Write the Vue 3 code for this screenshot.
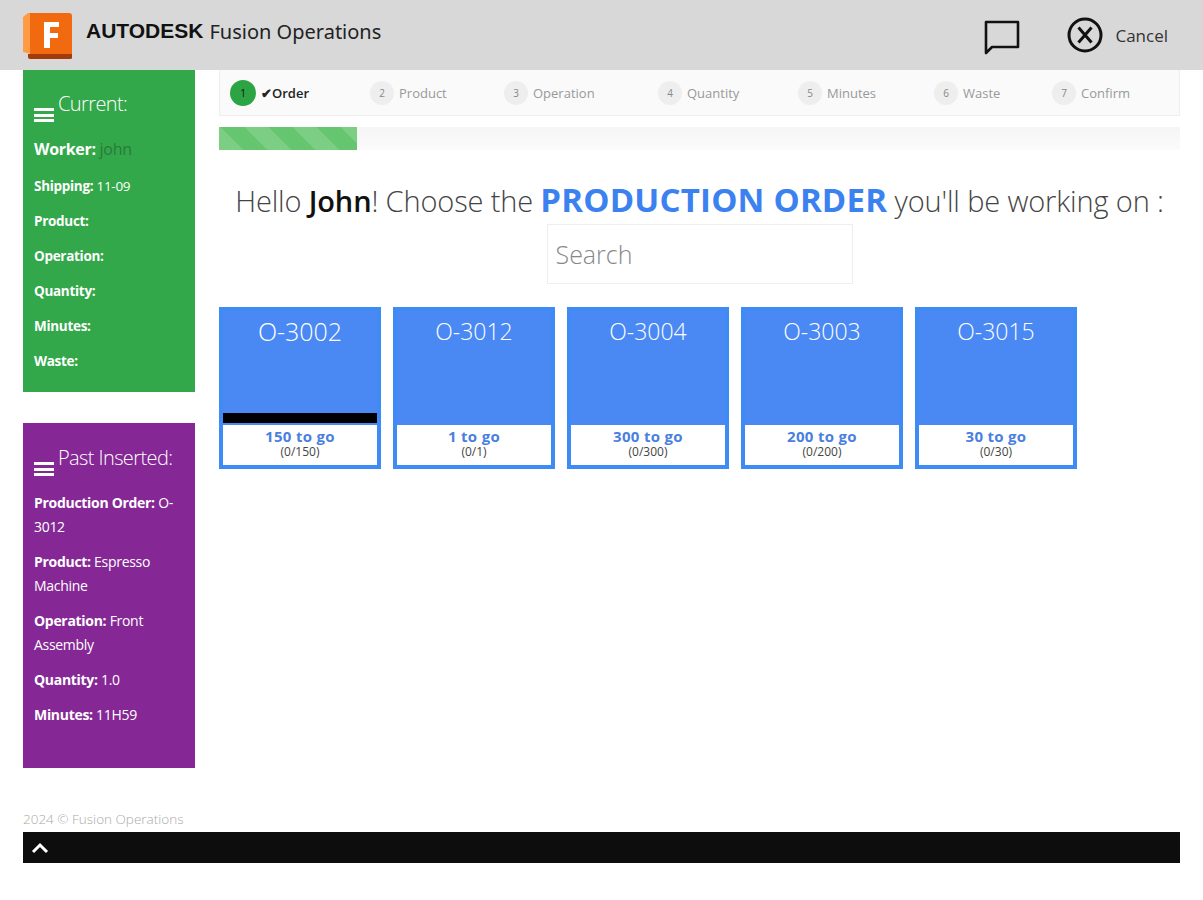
<script setup>
const steps = [
  { n: 1, label: 'Order', width: 140, active: true },
  { n: 2, label: 'Product', width: 134 },
  { n: 3, label: 'Operation', width: 154 },
  { n: 4, label: 'Quantity', width: 140 },
  { n: 5, label: 'Minutes', width: 136 },
  { n: 6, label: 'Waste', width: 118 },
  { n: 7, label: 'Confirm', width: 100 },
]

const orders = [
  { code: 'O-3002', left: 150, total: 150, started: true },
  { code: 'O-3012', left: 1, total: 1 },
  { code: 'O-3004', left: 300, total: 300 },
  { code: 'O-3003', left: 200, total: 200 },
  { code: 'O-3015', left: 30, total: 30 },
]

const current = [
  { key: 'Shipping', value: '11-09' },
  { key: 'Product' },
  { key: 'Operation' },
  { key: 'Quantity' },
  { key: 'Minutes' },
  { key: 'Waste' },
]

const past = [
  { key: 'Production Order', value: 'O-3012' },
  { key: 'Product', value: 'Espresso Machine' },
  { key: 'Operation', value: 'Front Assembly' },
  { key: 'Quantity', value: '1.0' },
  { key: 'Minutes', value: '11H59' },
]
</script>

<template>
  <div class="page">
    <header class="topbar">
      <div class="brand">
        <svg class="logo" width="50" height="47" viewBox="0 0 50 47">
          <path d="M0 5 L5 1 H45 V10 H8 V42 L0 40 Z" fill="#ff9a45" />
          <path d="M5 42 H49 V46 Q49 47 47 47 H7 Q5 47 5 45 Z" fill="#a23a0c" />
          <path d="M7 1 H46 Q49 1 49 4 V42 H7 Z" fill="#f26a0f" />
          <path d="M21 10 H36 V15 H27 V21 H35 V26 H27 V36 H21 Z" fill="#fff" />
        </svg>
        <span class="brand-name">AUTODESK</span>
        <span class="brand-product">Fusion Operations</span>
      </div>
      <div class="top-actions">
        <svg class="chat" width="38" height="36" viewBox="0 0 38 36">
          <path d="M3 3 H35 V28 H9 L3 34 Z" fill="none" stroke="#111" stroke-width="2.6" stroke-linejoin="round" />
        </svg>
        <button class="cancel">
          <svg width="36" height="36" viewBox="0 0 36 36">
            <circle cx="18" cy="18" r="16" fill="none" stroke="#111" stroke-width="3" />
            <path d="M11.5 10.5 L24.5 25.5 M24.5 10.5 L11.5 25.5" stroke="#111" stroke-width="3" />
          </svg>
          <span>Cancel</span>
        </button>
      </div>
    </header>

    <div class="body">
      <aside class="side">
        <section class="panel green">
          <h3 class="panel-title"><span class="burger"><i></i><i></i><i></i></span>Current:</h3>
          <p class="worker"><b>Worker:</b> <span class="worker-name">john</span></p>
          <p v-for="row in current" :key="row.key" class="row"><b>{{ row.key }}:</b> {{ row.value }}</p>
        </section>

        <section class="panel purple">
          <h3 class="panel-title"><span class="burger"><i></i><i></i><i></i></span>Past Inserted:</h3>
          <p v-for="row in past" :key="row.key" class="row"><b>{{ row.key }}:</b> {{ row.value }}</p>
        </section>
      </aside>

      <main class="main">
        <ul class="steps">
          <li
            v-for="s in steps"
            :key="s.n"
            class="step"
            :class="{ active: s.active }"
            :style="{ width: s.width + 'px' }"
          >
            <span class="step-num">{{ s.n }}</span>
            <span class="step-label"><template v-if="s.active">✔</template>{{ s.label }}</span>
          </li>
        </ul>

        <div class="progress"><div class="progress-bar"></div></div>

        <h2 class="hello">
          Hello <b class="name">John</b>! Choose the <b class="accent">PRODUCTION ORDER</b> you'll be working on :
        </h2>

        <input class="search" type="text" placeholder="Search" />

        <div class="orders">
          <article v-for="o in orders" :key="o.code" class="order" :class="{ started: o.started }">
            <div class="order-top">
              <span class="order-code">{{ o.code }}</span>
              <span v-if="o.started" class="order-mark"></span>
            </div>
            <div class="order-bottom">
              <strong>{{ o.left }} to go</strong>
              <small>(0/{{ o.total }})</small>
            </div>
          </article>
        </div>
      </main>
    </div>

    <footer class="footer">
      <p>2024 © Fusion Operations</p>
      <div class="footer-bar">
        <svg width="18" height="12" viewBox="0 0 18 12">
          <path d="M2 10 L9 3 L16 10" fill="none" stroke="#fff" stroke-width="3" />
        </svg>
      </div>
    </footer>
  </div>
</template>

<style>
body {
  background: #fff;
}
</style>

<style scoped>
.page {
  height: 900px;
  font-family: "Open Sans", "Liberation Sans", sans-serif;
  color: #333;
  overflow: hidden;
}
.topbar {
  height: 70px;
  background: #d8d8d8;
  padding: 0 35px 0 23px;
  display: flex;
  justify-content: space-between;
  box-sizing: border-box;
}
.brand {
  display: flex;
  align-items: center;
  height: 60px;
  padding-top: 1px;
}
.logo {
  margin-right: 13px;
  margin-top: 8px;
}
.brand-name {
  font-family: "Liberation Sans", sans-serif;
  font-weight: 700;
  font-size: 21px;
  color: #111;
  margin-right: 6px;
}
.brand-product {
  font-family: "Noto Sans", sans-serif;
  font-size: 20px;
  color: #222;
}
.top-actions {
  display: flex;
  align-items: flex-start;
  padding-top: 17px;
}
.chat {
  margin-top: 2px;
  margin-right: 46px;
}
.cancel {
  display: flex;
  align-items: center;
  gap: 12px;
  border: none;
  background: none;
  padding: 0;
  font: inherit;
  font-size: 17px;
  color: #333;
}
.body {
  display: flex;
  padding: 0 23px;
  gap: 24px;
  height: 729px;
}
.side {
  width: 172px;
  flex: none;
}
.panel {
  color: #fff;
  padding: 22px 11px 0;
  box-sizing: border-box;
}
.green {
  background: #32a84a;
  height: 322px;
}
.purple {
  background: #852895;
  height: 345px;
  margin-top: 31px;
  padding-top: 23px;
}
.panel-title {
  margin: 0 0 15px;
  font-size: 20px;
  line-height: 24px;
  font-weight: 300;
  letter-spacing: -0.6px;
}
.burger {
  display: inline-flex;
  flex-direction: column;
  justify-content: space-between;
  width: 20px;
  height: 14px;
  margin-right: 4px;
}
.burger i {
  display: block;
  height: 3px;
  background: #fff;
}
.row,
.worker {
  margin: 0 0 11px;
  font-size: 14px;
  line-height: 24px;
  font-weight: 400;
  letter-spacing: -0.3px;
}
.row b,
.worker b {
  font-weight: 700;
}
.worker {
  font-size: 16px;
  margin-bottom: 13px;
}
.worker-name {
  color: #2b7a3c;
  font-weight: 400;
}
.green .row {
  font-size: 13.5px;
}
.main {
  flex: 1;
  min-width: 0;
}
.steps {
  list-style: none;
  margin: 0;
  padding: 0 0 0 10px;
  height: 46px;
  display: flex;
  align-items: center;
  background: #fafafa;
  border: 1px solid #eee;
  border-top: none;
  box-sizing: border-box;
}
.step {
  display: flex;
  align-items: center;
  gap: 5px;
  font-size: 13px;
  color: #999;
}
.step-num {
  width: 24px;
  height: 24px;
  border-radius: 50%;
  background: #eee;
  font-size: 10px;
  display: flex;
  align-items: center;
  justify-content: center;
  color: #888;
}
.step.active .step-num {
  width: 26px;
  height: 26px;
  background: #2ca444;
  color: #111;
}
.step.active .step-label {
  color: #222;
  font-weight: 600;
}
.progress {
  height: 23px;
  margin-top: 11px;
  background: linear-gradient(#f5f5f5, #fbfbfb);
}
.progress-bar {
  width: 138px;
  height: 100%;
  background-color: #5cb85c;
  background-image: repeating-linear-gradient(
    45deg,
    rgba(255, 255, 255, 0.15) 0 17px,
    transparent 17px 34px
  );
  background-color: #65c66f;
}
.hello {
  margin: 30px 0 0;
  font-size: 29px;
  line-height: 40px;
  font-weight: 300;
  color: #444;
  text-align: center;
  white-space: nowrap;
  letter-spacing: -0.15px;
}
.name {
  font-weight: 600;
  color: #111;
}
.accent {
  font-weight: 700;
  font-size: 33px;
  color: #3b82f0;
  letter-spacing: 0.2px;
}
.search {
  display: block;
  width: 306px;
  height: 60px;
  margin: 3px auto 0;
  box-sizing: border-box;
  border: 1px solid #eee;
  padding: 0 8px;
  font: inherit;
  font-size: 25px;
  font-weight: 300;
  outline: none;
}
.search::placeholder {
  color: #888;
}
.orders {
  display: flex;
  gap: 12px;
  margin-top: 23px;
}
.order {
  width: 162px;
  height: 162px;
  box-sizing: border-box;
  border: 4px solid #3f8bf5;
  display: flex;
  flex-direction: column;
  background: #4a89f3;
}
.order-top {
  flex: 1;
  position: relative;
  text-align: center;
  color: #fff;
  font-size: 23px;
  font-weight: 300;
  line-height: 40px;
}
.started .order-code {
  font-size: 25px;
}
.order-mark {
  position: absolute;
  left: 0;
  right: 0;
  bottom: 2px;
  height: 10px;
  background: #000;
}
.order-bottom {
  height: 40px;
  background: #fff;
  text-align: center;
  display: flex;
  flex-direction: column;
  align-items: center;
  color: #444;
  padding-top: 3px;
  box-sizing: border-box;
}
.order-bottom strong {
  font-size: 15px;
  line-height: 17px;
  color: #4a7fe0;
  letter-spacing: 0.3px;
}
.order-bottom small {
  font-size: 12px;
  line-height: 14px;
}
.footer {
  padding: 0 23px;
}
.footer p {
  margin: 0;
  height: 33px;
  font-size: 13.5px;
  line-height: 40px;
  font-weight: 300;
  color: #aaa;
}
.footer-bar {
  height: 31px;
  background: #0d0d0d;
  display: flex;
  align-items: center;
  padding-left: 8px;
}
</style>
